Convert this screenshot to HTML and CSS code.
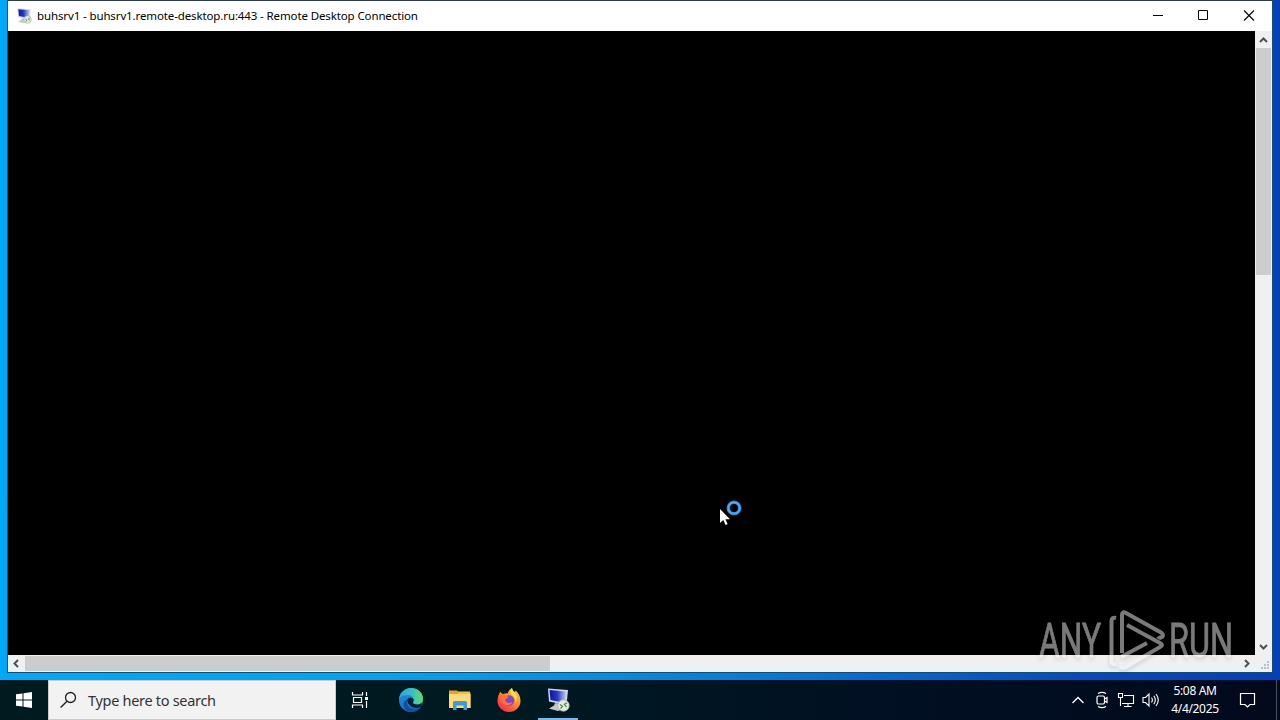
FILE: index.html
```html
<!doctype html>
<html lang="en">
<head>
    <meta charset="UTF-8">
    <title>Remote Desktop Connection</title>
    <link rel="stylesheet" href="styles.css">
</head>
<body>
    <svg class="defs" width="0" height="0">
        <defs>
            <linearGradient id="screen" x1="0" y1="0" x2="1" y2="0">
                <stop offset="0" stop-color="#0a15a8"/><stop offset=".45" stop-color="#2438c4"/><stop offset="1" stop-color="#c9d2f2"/>
            </linearGradient>
            <linearGradient id="edgeTop" x1="0" y1="0" x2="1" y2="0">
                <stop offset="0" stop-color="#2aa6dc"/><stop offset=".55" stop-color="#35c1c4"/><stop offset="1" stop-color="#62dc63"/>
            </linearGradient>
            <linearGradient id="edgeLow" x1="0" y1="0" x2="0" y2="1">
                <stop offset="0" stop-color="#1b8fdd"/><stop offset="1" stop-color="#1676cf"/>
            </linearGradient>
            <linearGradient id="fire" x1="1" y1="0" x2=".2" y2="1">
                <stop offset="0" stop-color="#ffe14a"/><stop offset=".45" stop-color="#ff9128"/><stop offset="1" stop-color="#f5244f"/>
            </linearGradient>
            <symbol id="rdp" viewBox="0 0 24 24">
                <path d="M2 .5l20 1.500-1.500 15L3 13.500z" fill="#d5d9e6"/>
                <path d="M3.500 2l17 1.500-1.500 11.500L4.500 12z" fill="url(#screen)"/>
                <path d="M9 15l6 1v2l2 3.500-5 1.500-9-2.500 5-3z" fill="#c4c8cd"/>
                <circle cx="17.500" cy="17.500" r="5.700" fill="#e4ebdf" stroke="#a9b3a4" stroke-width=".8"/>
                <path d="M14 16.500l2.500 1.800-2 2.400M21 14.700l-2.600 1.700 2.200 2.500" fill="none" stroke="#4d8a4c" stroke-width="1.300"/>
            </symbol>
        </defs>
    </svg>

    <div class="desktop">
        <div class="window">
            <div class="titlebar">
                <svg class="app-icon" width="16" height="16"><use href="#rdp"/></svg>
                <span class="title">buhsrv1 - buhsrv1.remote-desktop.ru:443 - Remote Desktop Connection</span>
                <div class="buttons">
                    <svg width="45" height="30"><path d="M17 14.500h10" stroke="#000"/></svg>
                    <svg width="45" height="30"><path d="M17.500 9.500h9v9h-9z" fill="none" stroke="#000"/></svg>
                    <svg width="45" height="30"><path d="M18 9.500l10 10M28 9.500l-10 10" stroke="#000" stroke-width="1.100"/></svg>
                </div>
            </div>
            <div class="content">
                <div class="session"></div>
                <div class="vscroll">
                    <svg width="17" height="17"><path d="M5 11l3.500-3.500L12 11" fill="none" stroke="#505050" stroke-width="2"/></svg>
                    <div class="vthumb"></div>
                    <svg class="down" width="17" height="17"><path d="M5 7l3.500 3.500L12 7" fill="none" stroke="#505050" stroke-width="2"/></svg>
                </div>
            </div>
            <div class="hscroll">
                <svg width="17" height="17"><path d="M10 5l-3.500 3.500 3.500 3.500" fill="none" stroke="#505050" stroke-width="2"/></svg>
                <div class="hthumb"></div>
                <svg class="right" width="17" height="17"><path d="M7 5l3.500 3.500L7 12" fill="none" stroke="#505050" stroke-width="2"/></svg>
                <svg class="grip" width="17" height="17"><path d="M12 6h2v2h-2zM9 9h2v2h-2zM12 9h2v2h-2zM6 12h2v2h-2zM9 12h2v2h-2zM12 12h2v2h-2z" fill="#bfbfbf"/></svg>
            </div>
        </div>

        <div class="taskbar">
            <div class="start">
                <svg width="16" height="16"><path d="M0 2.300l6.500-.9v6.100H0zM7.500 1.200L16 0v7.500H7.500zM0 8.500h6.500v6.100L0 13.700zM7.500 8.500H16V16l-8.500-1.200z" fill="#fff"/></svg>
            </div>
            <div class="search">
                <svg width="18" height="18"><circle cx="10.500" cy="6.500" r="5" fill="none" stroke="#222" stroke-width="1.300"/><path d="M7 10.200L.6 16.500" stroke="#222" stroke-width="1.400"/></svg>
                <span class="hint">Type here to search</span>
            </div>
            <div class="task">
                <svg width="18" height="18"><path d="M1.500 1v3h10V1M1.500 17v-3h10v3M2.500 6.500h8v5h-8zM15.500 1v4M15.500 10v7" fill="none" stroke="#fff" stroke-width="1.200"/><path d="M14 6h3v3h-3z" fill="#fff"/></svg>
            </div>
            <div class="task edge">
                <svg width="24" height="24" viewBox="0 0 24 24">
                    <circle cx="12" cy="12" r="12" fill="url(#edgeLow)"/>
                    <path d="M0 11C1 4 6 0 12 0c7 0 12 5 12 10.500 0 4-3 6-6.200 6-2.800 0-4.300-1.200-3.800-2.200 2-3-.2-7.300-5-7.300C5 7 1.500 8.600 0 11z" fill="url(#edgeTop)"/>
                    <path d="M8.300 11.500c-1.500 5.500 3 10 8.200 9.200 2.500-.3 4.600-1.500 5.600-2.300C20 22 16 24 12 24c-4.500-.4-7.500-3.700-7.500-7.700 0-2.500 1.500-4.200 3.800-4.800z" fill="#124f9e"/>
                    <path d="M14 14.300c-.6 1 1 2.200 3.800 2.200 1.900 0 3.400-.5 4.500-1.500.7.800.5 2.200-.2 3.400-2 1.500-5 1.900-7.600 1.100-4-1.200-6.300-4.600-6.200-8C9.800 9 14 9.200 14.600 11.700c.2 1-.1 1.700-.6 2.600z" fill="#061e30"/>
                </svg>
            </div>
            <div class="task">
                <svg width="22" height="20" viewBox="0 0 22 20">
                    <path d="M0 .5h8l2 2h11.500V18H0z" fill="#e5a52d"/>
                    <path d="M9 1.500h12v4H9z" fill="#f3bd4a"/>
                    <path d="M0 4h21.500v14H0z" fill="#ffdc78"/>
                    <path d="M4 20v-7.500q0-1.500 1.500-1.500h11q1.500 0 1.500 1.500V20h-3.500v-4.500h-7V20z" fill="#3d9bd8"/>
                </svg>
            </div>
            <div class="task">
                <svg width="24" height="24" viewBox="0 0 24 24">
                    <path d="M3.500 3.500C4 5 5 6 6.500 6c1.500-.8 3-.8 4-.5 1-2.500 2.500-4.500 4.500-5.500.2 2 1.200 3 2.500 3.800 1-.3 1-.8 1-1.300 3 2.500 5 6 5 10.500 0 6-5 11-11.500 11S.5 19 .5 13c0-3.500 1-7 3-9.500z" fill="url(#fire)"/>
                    <circle cx="12" cy="12.500" r="5.200" fill="#7946d4"/>
                    <path d="M4 8c3-1.500 5 0 7.500.7-.3 1.500-1.600 1.800-3 2.300-.5 2 1 4 3.500 4 1.500 0 2.500-.8 3.500-.7-1 2.200-3 3.200-5 3C6 17 3.500 13 4 8z" fill="#ff7139"/>
                    <path d="M15 0c.2 3 3.500 5 4.500 8 .7 2.500 0 5-1 6.500.2-3-1-6-3.500-7.500-2-1.200-2-4.500 0-7z" fill="#ffe34e"/>
                </svg>
            </div>
            <div class="task active">
                <svg width="24" height="24"><use href="#rdp"/></svg>
            </div>

            <div class="tray">
                <svg width="14" height="14"><path d="M1.500 10L7 4.500l5.500 5.500" fill="none" stroke="#fff" stroke-width="1.300"/></svg>
                <svg class="meet" width="14" height="18" fill="none" stroke="#fff" stroke-width="1.200"><path d="M3 2.500Q7 .2 11 2.500M3 15.500q4 2.300 8 0"/><rect x="2" y="5" width="7.500" height="8" rx="1.500"/><path d="M9.500 8l2.500-1.500v5L9.500 10"/></svg>
                <svg class="net" width="18" height="16" fill="none" stroke="#fff" stroke-width="1.100"><path d="M7 3.500h9.500v8H5M11 11.500V14M7 14.500h7.500M1.500 1.500h4v4h-4zM3.500 6v8"/></svg>
                <svg class="vol" width="18" height="16" fill="none" stroke="#fff" stroke-width="1.100"><path d="M1 5.500h2.500L7 2v12l-3.500-3.500H1zM9.500 5.500q1.800 2.500 0 5M11.800 3.800q3 4.200 0 8.400M14 2q4.500 6 0 12"/></svg>
            </div>
            <div class="clock">
                <span class="time">5:08 AM</span>
                <span class="date">4/4/2025</span>
            </div>
            <svg class="notify" width="18" height="18"><path d="M1.500 2.500h14v11h-4.500l-2.500 2.500-2.500-2.500h-4.500z" fill="none" stroke="#fff" stroke-width="1.200"/></svg>
            <div class="peek"></div>
        </div>

        <svg class="cursor" width="24" height="30">
            <circle cx="15" cy="10" r="5.700" fill="none" stroke="#176db5" stroke-width="3.600"/>
            <circle cx="15" cy="10" r="5.700" fill="none" stroke="#46aef5" stroke-width="2.200"/>
            <path d="M1 11v14l3.300-3 2.300 5 2-1-2.200-4.800H11z" fill="#fff"/>
        </svg>

        <svg class="watermark" width="240" height="75">
            <text x="3" y="51.500" textLength="62" lengthAdjust="spacingAndGlyphs">ANY</text>
            <text x="133" y="51.500" textLength="64" lengthAdjust="spacingAndGlyphs">RUN</text>
            <g class="logo">
                <path d="M80 13q-4.500-1-4.500 3V56q0 4.500 5 3"/>
                <path d="M86 48V10q0-4 4-2L125 27.500q4 3 0 5-2 .5-3-1"/>
                <path d="M91 20l33 18q4 2 0 4L90 62q-4 2-6-1"/>
                <path d="M85 52l26-14"/>
            </g>
        </svg>
    </div>
</body>
</html>
```
FILE: styles.css
```css
*{padding: 0; margin: 0; box-sizing: border-box;}
body{width: 1280px; height: 720px; overflow: hidden; font-family: "Noto Sans", "Open Sans", sans-serif;}
svg{display: block; flex: none;}
.defs{position: absolute;}
.desktop{position: relative; width: 1280px; height: 720px; padding-top: 1px; display: flex; flex-direction: column; background: linear-gradient(90deg, #00a8f8 0, #00a5f0 30%, #0878d8 60%, #0649bd 85%, #0540b8 100%);}

.window{width: 1266px; height: 672px; margin-left: 7px; border: 1px solid #124e78; border-top: 0; box-shadow: 0 -1px #2c3b50; display: flex; flex-direction: column; background: #f0f0f0;}
.titlebar{height: 30px; background: #fff; display: flex; align-items: center;}
.app-icon{margin-left: 8px; margin-top: -1px;}
.title{margin-left: 5px; font-size: 11.5px; letter-spacing: -.12px; line-height: 30px; white-space: nowrap; color: #000;}
.buttons{display: flex; margin-left: auto; margin-right: 1px;}

.content{display: flex; height: 624px;}
.session{width: 1247px; background: #000;}
.vscroll{width: 17px; display: flex; flex-direction: column; background: #f0f0f0;}
.vthumb{height: 227px; margin-left: 1px; width: 15px; background: #cdcdcd;}
.down{margin-top: auto;}
.hscroll{height: 17px; display: flex; background: #f0f0f0;}
.hthumb{width: 525px; height: 15px; margin-top: 1px; background: #cdcdcd;}
.right{margin-left: auto;}

.taskbar{height: 40px; margin-top: 7px; display: flex; background: linear-gradient(90deg, #001a20 0, #001922 40%, #010e22 75%, #020a1c 100%);}
.start{width: 48px; display: flex; align-items: center; justify-content: center;}
.search{width: 288px; background: #f2f2f2; border: 1px solid #c9cccd; display: flex; align-items: center;}
.search svg{margin-left: 11px;}
.hint{margin-left: 10px; font-size: 14.5px; letter-spacing: -.3px; color: #333; white-space: nowrap;}
.task{width: 49px; display: flex; align-items: center; justify-content: center;}
.search + .task{width: 50px; padding-right: 2px;}
.active{width: 40px; margin-left: 5px; border-bottom: 2px solid #76b9ed; padding-top: 2px;}
.tray{margin-left: auto; display: flex; align-items: center;}
.meet{margin-left: 10px;}
.net{margin-left: 8px;}
.vol{margin-left: 7px;}
.clock{width: 70px; display: flex; flex-direction: column; align-items: center; font-size: 12px; line-height: 18px; padding-top: 2px; color: #fff; white-space: nowrap;}
.time, .date{letter-spacing: -.35px;}
.notify{margin: 11px 19px 0 9px;}
.peek{width: 4px; border-left: 1px solid #4a5361;}

.cursor{position: absolute; left: 719px; top: 498px;}
.watermark{position: absolute; left: 1036px; top: 605px; opacity: .5; filter: drop-shadow(0 2px 2px rgba(0,0,0,.3));}
.watermark text{font-family: "Roboto", "Liberation Sans", sans-serif; font-size: 48px; fill: #f4f4f4; stroke: #f4f4f4; stroke-width: .8;}
.logo{fill: none; stroke: #f4f4f4; stroke-width: 4;}
```
